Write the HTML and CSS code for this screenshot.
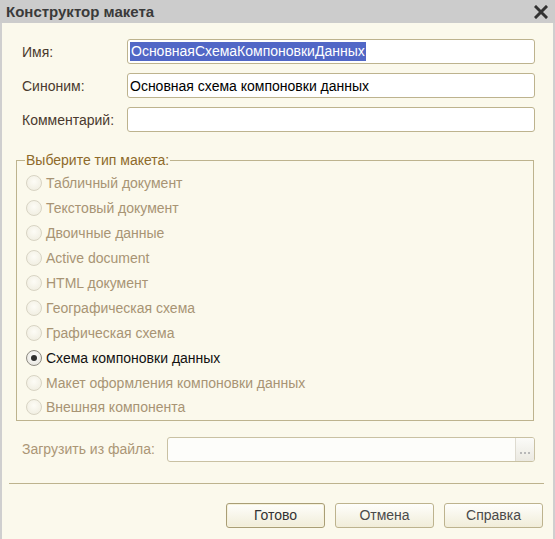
FILE: index.html
```html
<!DOCTYPE html>
<html lang="ru">
<head>
<meta charset="utf-8">
<title>Конструктор макета</title>
<link rel="stylesheet" href="styles.css">
</head>
<body>
<div class="window">
  <div class="titlebar">
    <span class="title">Конструктор макета</span>
    <svg class="close" width="14" height="14" viewBox="0 0 14 14"><path d="M2 2 L12 12 M12 2 L2 12" stroke="#333" stroke-width="3" stroke-linecap="square"/></svg>
  </div>
  <div class="content">
    <div class="fields">
      <div class="row"><label class="lbl">Имя:</label><div class="input"><span class="sel">ОсновнаяСхемаКомпоновкиДанных</span></div></div>
      <div class="row"><label class="lbl">Синоним:</label><div class="input">Основная схема компоновки данных</div></div>
      <div class="row"><label class="lbl">Комментарий:</label><div class="input"></div></div>
    </div>
    <fieldset class="group">
      <legend>Выберите тип макета:</legend>
      <div class="radio dis"><span class="dot"></span>Табличный документ</div>
      <div class="radio dis"><span class="dot"></span>Текстовый документ</div>
      <div class="radio dis"><span class="dot"></span>Двоичные данные</div>
      <div class="radio dis"><span class="dot"></span>Active document</div>
      <div class="radio dis"><span class="dot"></span>HTML документ</div>
      <div class="radio dis"><span class="dot"></span>Географическая схема</div>
      <div class="radio dis"><span class="dot"></span>Графическая схема</div>
      <div class="radio on"><span class="dot"></span>Схема компоновки данных</div>
      <div class="radio dis"><span class="dot"></span>Макет оформления компоновки данных</div>
      <div class="radio dis"><span class="dot"></span>Внешняя компонента</div>
    </fieldset>
    <div class="row load"><label class="lbl2">Загрузить из файла:</label><div class="input file"><span class="fill"></span><span class="btn3"><i></i><i></i><i></i></span></div></div>
    <div class="sep"></div>
    <div class="buttons">
      <button class="btn def">Готово</button>
      <button class="btn">Отмена</button>
      <button class="btn">Справка</button>
    </div>
  </div>
</div>
</body>
</html>
```
FILE: styles.css
```css
* { box-sizing: border-box; }
html, body { margin: 0; padding: 0; }
body {
  width: 555px; height: 539px; overflow: hidden;
  font-family: "Liberation Sans", Arial, sans-serif;
  font-size: 14px;
  background: #fbf9ec;
}
.window {
  width: 555px; height: 539px;
  border-left: 2px solid #cfcfcf;
  border-right: 2px solid #cfcfcf;
  background: #fbf9ec;
  display: flex; flex-direction: column;
}
.titlebar {
  height: 23px; background: #cccccc;
  display: flex; align-items: center; justify-content: space-between;
  padding: 0 7px 0 4px;
  margin: 0 -2px;
}
.title { font-weight: bold; font-size: 15px; color: #3a3a3a; padding-left: 2px; }
.content { padding: 16px 0 0 0; display: flex; flex-direction: column; }
.fields { display: flex; flex-direction: column; gap: 9px; padding: 0 18px 0 20px; }
.row { display: flex; align-items: center; height: 25px; }
.lbl { width: 105px; color: #4a3a2e; }
.input {
  flex: 1; height: 25px; background: #fff;
  border: 1px solid #bdb38e; border-radius: 3px;
  padding: 0 2px; display: flex; align-items: center;
  color: #000; white-space: nowrap; overflow: hidden;
}
.sel { background: #5167c6; color: #fff; padding: 0 1px; line-height: 19px; }
.group {
  margin: 20px 19px 0 14px; padding: 3px 0 0 9px;
  border: 1px solid #bdb38e; border-radius: 0;
}
.group legend { color: #8e6a2a; padding: 0 1px; margin-left: -1px; line-height: 16px; }
.radio { display: flex; align-items: center; height: 24.9px; }
.radio.dis { color: #a89474; }
.radio.on { color: #111; }
.dot {
  width: 16px; height: 16px; border-radius: 50%;
  border: 1px solid #d8d4c4;
  background: radial-gradient(circle at 50% 40%, #fdfcf6, #eeebdd);
  margin-right: 4px; display: inline-flex; align-items: center; justify-content: center;
  flex: none;
}
.radio.on .dot { border-color: #8d8a82; background: radial-gradient(circle at 50% 40%, #ffffff, #e2e0d8); }
.radio.on .dot::after { content: ""; width: 6px; height: 6px; border-radius: 50%; background: #2f2f2f; }
.load { padding: 0 18px 0 20px; margin-top: 16px; }
.lbl2 { width: 145px; color: #ab9676; }
.input.file { padding: 0; background: #fdfdfa; border-color: #c9c1a3; }
.fill { flex: 1; }
.btn3 {
  width: 19px; height: 100%; border-left: 1px solid #dedbd0;
  background: linear-gradient(#fbfbf8, #ebe9e1);
  display: flex; align-items: flex-end; justify-content: center; gap: 2px;
  padding-bottom: 7px;
}
.btn3 i { width: 2px; height: 2px; background: #b8b8b8; display: block; }
.sep { height: 1px; background: #bdb38e; margin: 21px 9px 0 7px; }
.buttons { display: flex; justify-content: flex-end; gap: 10px; padding: 19px 10px 0 0; }
.btn {
  width: 99px; height: 25px; font-family: inherit; font-size: 14px; color: #4a4a4a;
  border: 1px solid #bdb38e; border-radius: 3px;
  background: linear-gradient(#fefefb, #f1edd9);
  padding: 0;
}
.btn.def { border-color: #a99e76; box-shadow: inset 0 0 0 1px #f6f2dc; color: #333; }
```
